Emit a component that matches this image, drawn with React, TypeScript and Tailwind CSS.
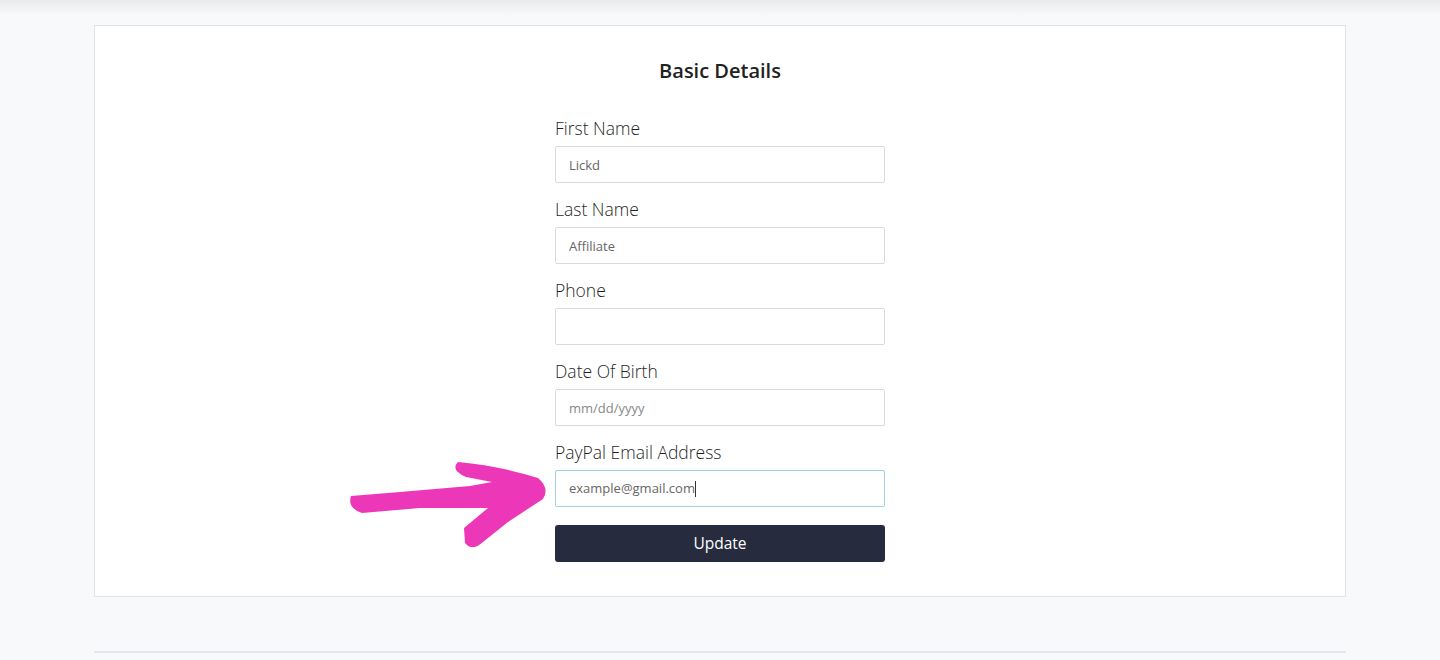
const FIELDS = [
  { label: "First Name", value: "Lickd", placeholder: "" },
  { label: "Last Name", value: "Affiliate", placeholder: "" },
  { label: "Phone", value: "", placeholder: "" },
  { label: "Date Of Birth", value: "", placeholder: "mm/dd/yyyy" },
];

function PinkArrow() {
  return (
    <svg
      className="absolute left-0 top-0 pointer-events-none"
      width="1440"
      height="660"
      viewBox="0 0 1440 660"
    >
      <path
        d="M351 496 L400 492 L470 486 L492 482 L466 477 Q450 470 458 462 Q500 466 538 478 Q550 488 543 499 L508 522 L483 542 Q472 552 465 543 L464 528 L488 508 L420 508 L362 513 Q347 508 351 496 Z"
        fill="#ec38b8"
      />
    </svg>
  );
}

export default function App() {
  return (
    <div className="relative w-[1440px] h-[660px] overflow-hidden bg-[#f7f9fb] font-['Open_Sans',sans-serif]">
      {/* header shadow */}
      <div className="h-[15px] bg-gradient-to-b from-[#e9eaec] to-[#f7f9fb]" />

      <div className="mx-[94px] mt-[10px] bg-white border border-[#dde3ec] flex flex-col items-center pt-[32px] pb-[34px]">
        <h2 className="text-[20px] leading-[26px] font-semibold text-[#222]">Basic Details</h2>

        <form className="w-[330px] mt-[31px]" onSubmit={(e) => e.preventDefault()}>
          {FIELDS.map((f) => (
            <div key={f.label} className="mb-[13px]">
              <label className="block text-[17.5px] leading-[26px] font-light text-[#1f1f1f] mb-[5px]">{f.label}</label>
              <input
                type="text"
                defaultValue={f.value}
                placeholder={f.placeholder}
                className="w-full h-[37px] border border-[#d6dbe3] rounded-[2px] px-[13px] text-[13px] text-[#666] placeholder-[#888] outline-none"
              />
            </div>
          ))}

          <div className="mb-[18px]">
            <label className="block text-[17.5px] leading-[26px] font-light text-[#1f1f1f] mb-[5px]">PayPal Email Address</label>
            <div className="w-full h-[37px] border border-[#9fd0e8] rounded-[2px] px-[13px] flex items-center text-[13px] text-[#666]">
              example@gmail.com
              <span className="w-px h-[16px] bg-[#333]" />
            </div>
          </div>

          <button
            type="submit"
            className="w-full h-[37px] rounded-[3px] bg-[#262c3d] text-white text-[15.5px]"
          >
            Update
          </button>
        </form>
      </div>

      <div className="mx-[94px] mt-[54px] h-[40px] border-t-2 border-[#e3e8ef]" />

      <PinkArrow />
    </div>
  );
}
